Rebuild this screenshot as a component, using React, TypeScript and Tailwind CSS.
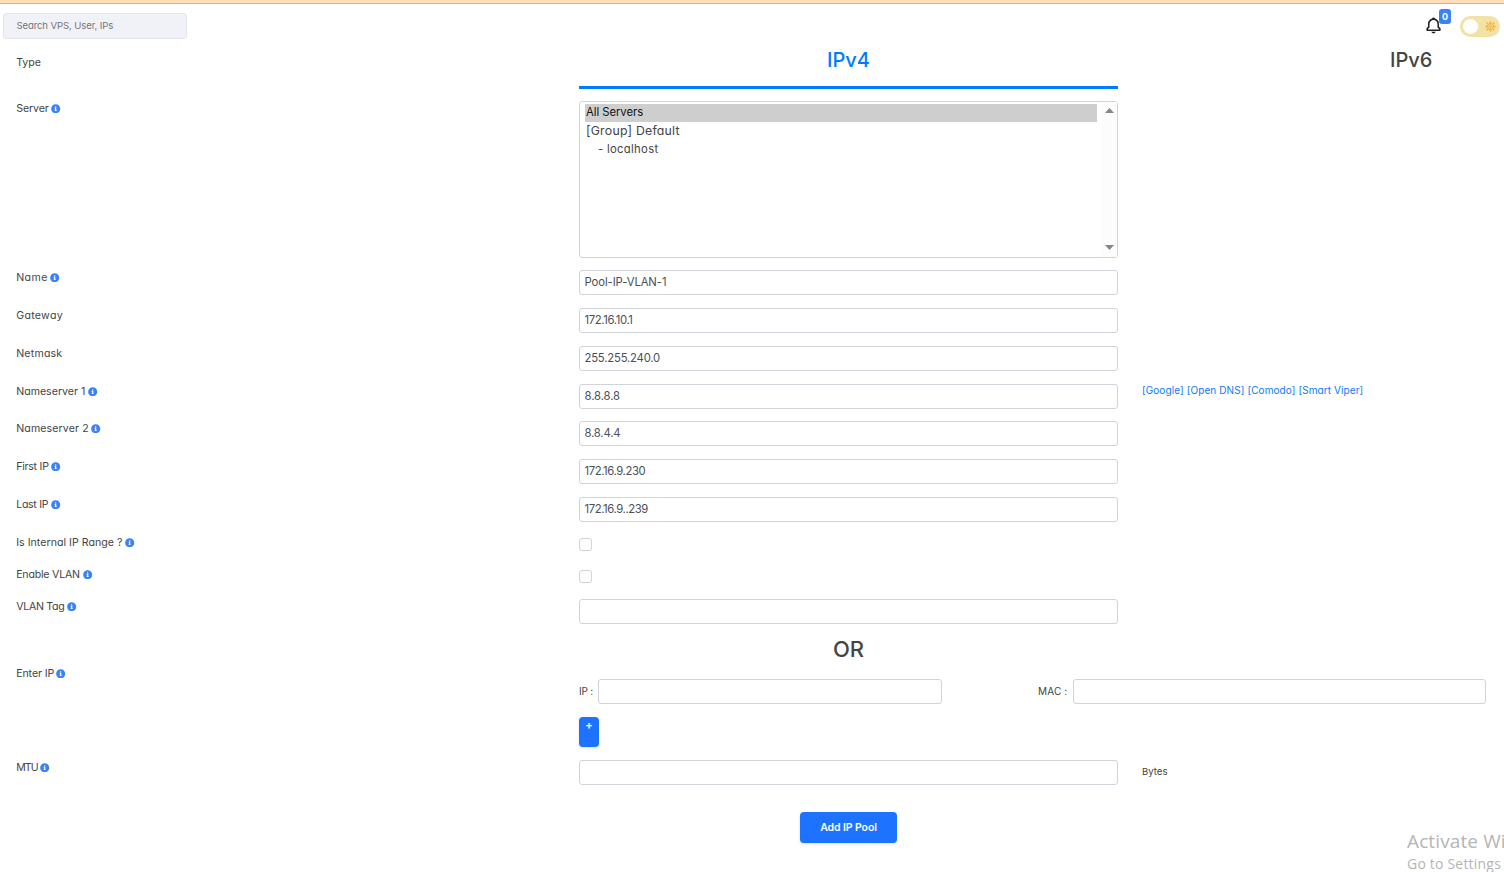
import React from "react";
import { FaInfoCircle } from "react-icons/fa";
import { BiBell } from "react-icons/bi";

type LabelProps = { text: string; width: string; info?: boolean };

function Label({ text, width, info = true }: LabelProps) {
  return (
    <div className="flex h-[15px] w-[563px] shrink-0 items-center pl-[0.2px] text-[10.6px] leading-[15px]">
      <span className={`${width} whitespace-nowrap`}>{text}</span>
      {info && <FaInfoCircle className="ml-[0.3px] size-[9.4px] shrink-0 text-[#3b82f6]" />}
    </div>
  );
}

function TextField({ value = "", className = "w-[539px]" }: { value?: string; className?: string }) {
  return (
    <input
      readOnly
      value={value}
      className={`${className} block h-[25px] shrink-0 rounded-[3px] border border-[#ced4da] bg-white pb-px pl-[4.5px] text-[11.3px] text-[#495057] outline-none`}
    />
  );
}

function Check() {
  return <span className="mt-[3px] block size-[13px] rounded-[3px] border border-[#d3d3d5] bg-white" />;
}

function SunIcon() {
  const angles = [0, 45, 90, 135, 180, 225, 270, 315];
  return (
    <svg viewBox="-12 -12 24 24" className="size-[11px]" fill="none" stroke="#f0b23c">
      <circle r="6.6" strokeWidth="2" />
      <circle r="2" strokeWidth="1.6" />
      {angles.map((a) => (
        <g key={a} transform={`rotate(${a})`}>
          <path d="M0-2.5V-11" strokeWidth="1.5" />
          <path d="M-2-8.5h4L0-12z" fill="#f0b23c" strokeWidth="0.6" />
        </g>
      ))}
    </svg>
  );
}

type Row = { label: string; width: string; info?: boolean; height: string; field: React.ReactNode; extra?: React.ReactNode };

const rows: Row[] = [
  { label: "Name", width: "w-[34px] tracking-[0.4px]", height: "h-[38px]", field: <TextField value="Pool-IP-VLAN-1" className="w-[539px] tracking-[-0.1px]" /> },
  { label: "Gateway", width: "w-[50px] tracking-[0.3px]", info: false, height: "h-[38px]", field: <TextField value="172.16.10.1" className="w-[539px] tracking-[-0.35px]" /> },
  { label: "Netmask", width: "w-[50px] tracking-[0.2px]", info: false, height: "h-[38px]", field: <TextField value="255.255.240.0" className="w-[539px] tracking-[-0.2px]" /> },
  {
    label: "Nameserver 1",
    width: "w-[72px]",
    height: "h-[37px]",
    field: <TextField value="8.8.8.8" className="w-[539px] tracking-[-0.1px]" />,
    extra: (
      <div className="ml-6 flex h-[14px] gap-[3px] whitespace-nowrap text-[10px] leading-[13px] tracking-[0.09px] text-[#0d78f2]">
        <a>[Google]</a>
        <a>[Open DNS]</a>
        <a>[Comodo]</a>
        <a>[Smart Viper]</a>
      </div>
    ),
  },
  { label: "Nameserver 2", width: "w-[75px] tracking-[0.12px]", height: "h-[38px]", field: <TextField value="8.8.4.4" className="w-[539px] tracking-[-0.2px]" /> },
  { label: "First IP", width: "w-[35px] tracking-[-0.25px]", height: "h-[38px]", field: <TextField value="172.16.9.230" className="w-[539px] tracking-[-0.4px]" /> },
  { label: "Last IP", width: "w-[35px] tracking-[-0.3px]", height: "h-[38px]", field: <TextField value="172.16.9..239" className="w-[539px] tracking-[-0.4px]" /> },
  { label: "Is Internal IP Range ?", width: "w-[109px] tracking-[0.03px]", height: "h-8", field: <Check /> },
  { label: "Enable VLAN", width: "w-[67px] tracking-[-0.2px]", height: "h-8", field: <Check /> },
  { label: "VLAN Tag", width: "w-[51px] tracking-[-0.3px]", height: "h-[38px]", field: <TextField /> },
];

export default function App() {
  return (
    <div className="relative h-[872px] w-[1504px] overflow-hidden bg-white font-['Inter',sans-serif] text-[#444] [font-feature-settings:'cv11']">
      <div className="h-1 border-b border-[#d2b48c] bg-[#ffdeb8]" />

      <header className="flex h-[39px] items-start justify-between pl-[3px] pr-1">
        <div className="mt-[9px] flex h-[26px] w-[184px] items-center rounded-[3px] border border-[#e2e5f1] bg-[#f1f2f8] pl-[12.4px] text-[9.6px] tracking-[-0.12px] text-[#757575]">
          Search VPS, User, IPs
        </div>
        <div className="flex">
          <div className="relative mr-[17px] mt-3">
            <BiBell className="size-[19px] text-[#222]" />
            <span className="absolute -top-[7px] left-[15px] flex h-[15px] w-3 items-center justify-center rounded-[3px] bg-[#3b82f6] text-[9px] font-bold text-white">
              0
            </span>
          </div>
          <div className="mt-3 flex h-[21px] w-10 items-center justify-between rounded-full bg-[#f3e2a5] pl-[3px] pr-[4px]">
            <span className="size-[15px] rounded-full bg-white" />
            <SunIcon />
          </div>
        </div>
      </header>

      <main className="pl-4">
        <div className="flex h-[58px]">
          <div className="pt-3">
            <Label text="Type" width="w-[30px]" info={false} />
          </div>
          <div className="h-[46px] w-[539px] shrink-0 border-b-[3px] border-[#007bff] text-center text-[20px] font-medium leading-[34px] text-[#007bff]">
            IPv4
          </div>
          <div className="ml-6 h-[46px] w-[539px] shrink-0 pl-[248px] text-[20px] font-medium leading-[34px]">IPv6</div>
        </div>

        <div className="flex h-[169px]">
          <Label text="Server" width="w-[35px] tracking-[-0.1px]" />
          <div className="flex h-[157px] w-[539px] rounded-[3px] border border-[#ced4da]">
            <div className="flex-1 pl-[5px] pr-[5px] pt-[2px] text-[11.3px] leading-[18px]">
              <div className="h-[18px] bg-[#cecece] pl-px leading-[17px] tracking-[-0.05px] text-[#101010]">All Servers</div>
              <div className="h-[18px] pl-px text-[12.3px] tracking-[0.23px]">[Group] Default</div>
              <div className="h-[18px] pl-[13px] leading-[19px] tracking-[0.3px]">- localhost</div>
            </div>
            <div className="flex w-[15px] flex-col items-center justify-between bg-[#fcfcfc] pb-[7px] pt-[6px]">
              <svg width="9" height="5" viewBox="0 0 9 5"><path d="M4.5 0 9 5H0z" fill="#858585" /></svg>
              <svg width="9" height="5" viewBox="0 0 9 5"><path d="M0 0h9L4.5 5z" fill="#858585" /></svg>
            </div>
          </div>
        </div>

        {rows.map((r) => (
          <div key={r.label} className={`flex items-start ${r.height}`}>
            <Label text={r.label} width={r.width} info={r.info} />
            {r.field}
            {r.extra}
          </div>
        ))}

        <div className="ml-[563px] h-[29px] w-[539px] text-center text-[22px] font-medium leading-[25px]">OR</div>

        <div className="flex h-[94px]">
          <Label text="Enter IP" width="w-[40px] tracking-[-0.1px]" />
          <div>
            <div className="mt-[13px] flex h-[25px] items-center text-[10px]">
              <span className="w-[19px] whitespace-nowrap tracking-[-0.25px]">IP :</span>
              <TextField className="w-[344px]" />
              <span className="ml-24 w-[35px] whitespace-nowrap tracking-[0.15px]">MAC :</span>
              <TextField className="w-[413px]" />
            </div>
            <button className="mt-[13px] flex h-[30px] w-5 justify-center rounded-[4px] bg-[#1d72ff] pt-[2px] text-[11px] font-bold leading-[13px] text-white shadow-sm">
              +
            </button>
          </div>
        </div>

        <div className="flex h-[52px]">
          <Label text="MTU" width="w-[24px] tracking-[-0.9px]" />
          <TextField />
          <span className="ml-6 mt-[5px] text-[9.6px] leading-[14px]">Bytes</span>
        </div>

        <button className="ml-[784px] flex h-[31px] w-[97px] items-center justify-center rounded-[4px] bg-[#1d72ff] text-[10.5px] font-semibold tracking-[-0.1px] text-white shadow-sm">
          Add IP Pool
        </button>
      </main>

      <div className="absolute left-[1407px] top-[829px] h-[43px] w-[97px] overflow-hidden whitespace-nowrap font-['Open_Sans',sans-serif] text-[#b5b5b5]">
        <div className="text-[19px] leading-[25px] tracking-[0.12px]">Activate Wi</div>
        <div className="text-[14px] leading-5 tracking-[0.2px]">Go to Settings</div>
      </div>
    </div>
  );
}
